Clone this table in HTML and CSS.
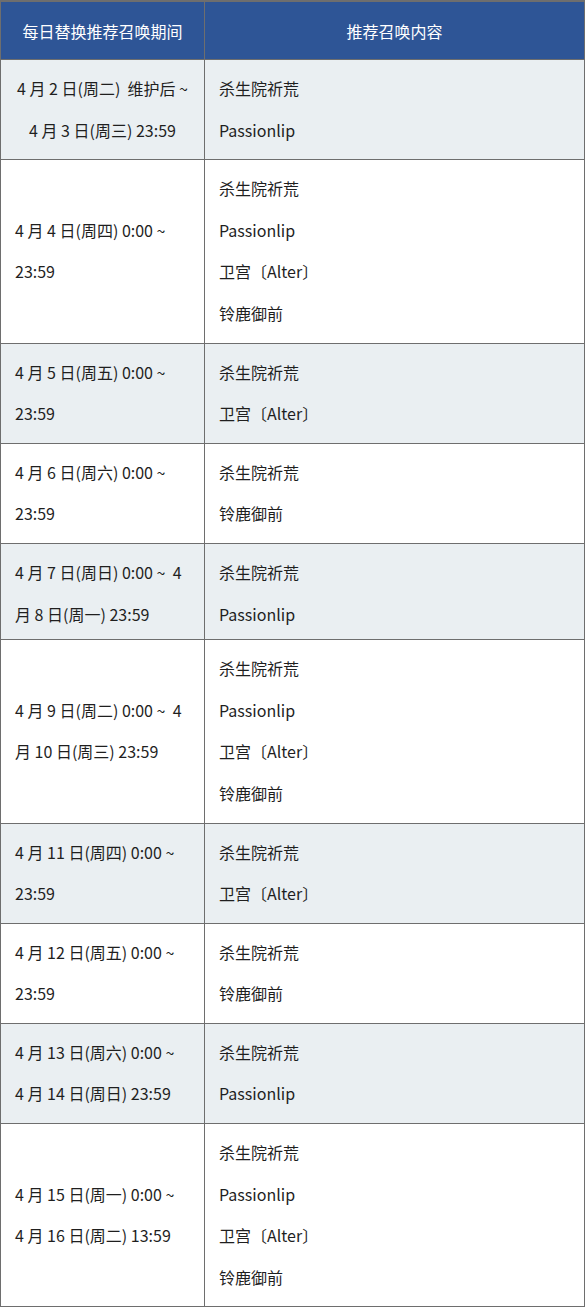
FILE: index.html
```html
<!DOCTYPE html>
<html lang="zh-CN">
<head>
<meta charset="utf-8">
<title>每日替换推荐召唤</title>
<link rel="stylesheet" href="styles.css">
</head>
<body>
<table class="schedule">
  <thead>
    <tr>
      <th class="col-period">每日替换推荐召唤期间</th>
      <th class="col-content">推荐召唤内容</th>
    </tr>
  </thead>
  <tbody>
    <tr class="shade">
      <td class="period center">4 月 2 日(周二)&nbsp; 维护后 ~<br>4 月 3 日(周三) 23:59</td>
      <td class="content">杀生院祈荒<br>Passionlip</td>
    </tr>
    <tr>
      <td class="period">4 月 4 日(周四) 0:00 ~<br>23:59</td>
      <td class="content">杀生院祈荒<br>Passionlip<br>卫宫〔Alter〕<br>铃鹿御前</td>
    </tr>
    <tr class="shade">
      <td class="period">4 月 5 日(周五) 0:00 ~<br>23:59</td>
      <td class="content">杀生院祈荒<br>卫宫〔Alter〕</td>
    </tr>
    <tr>
      <td class="period">4 月 6 日(周六) 0:00 ~<br>23:59</td>
      <td class="content">杀生院祈荒<br>铃鹿御前</td>
    </tr>
    <tr class="shade tight">
      <td class="period">4 月 7 日(周日) 0:00 ~&nbsp; 4<br>月 8 日(周一) 23:59</td>
      <td class="content">杀生院祈荒<br>Passionlip</td>
    </tr>
    <tr>
      <td class="period">4 月 9 日(周二) 0:00 ~&nbsp; 4<br>月 10 日(周三) 23:59</td>
      <td class="content">杀生院祈荒<br>Passionlip<br>卫宫〔Alter〕<br>铃鹿御前</td>
    </tr>
    <tr class="shade">
      <td class="period">4 月 11 日(周四) 0:00 ~<br>23:59</td>
      <td class="content">杀生院祈荒<br>卫宫〔Alter〕</td>
    </tr>
    <tr>
      <td class="period">4 月 12 日(周五) 0:00 ~<br>23:59</td>
      <td class="content">杀生院祈荒<br>铃鹿御前</td>
    </tr>
    <tr class="shade">
      <td class="period">4 月 13 日(周六) 0:00 ~<br>4 月 14 日(周日) 23:59</td>
      <td class="content">杀生院祈荒<br>Passionlip</td>
    </tr>
    <tr>
      <td class="period">4 月 15 日(周一) 0:00 ~<br>4 月 16 日(周二) 13:59</td>
      <td class="content">杀生院祈荒<br>Passionlip<br>卫宫〔Alter〕<br>铃鹿御前</td>
    </tr>
  </tbody>
</table>
</body>
</html>
```

FILE: styles.css
```css
html, body {
  margin: 0;
  padding: 0;
  background: #ffffff;
}

.schedule {
  width: 585px;
  border-collapse: collapse;
  table-layout: fixed;
  font-family: "Noto Sans CJK SC", "Noto Sans", sans-serif;
  font-size: 16px;
  color: #1f1f1f;
}

.schedule th,
.schedule td {
  border: 1px solid #6e6e6e;
  white-space: nowrap;
}

.schedule thead th {
  background: #2e5596;
  color: #ffffff;
  font-weight: normal;
  height: 57px;
  padding: 0;
  text-align: center;
  vertical-align: middle;
  border-top-width: 2px;
}

.col-period {
  width: 203px;
}

.schedule td {
  padding: 8px 14px;
  line-height: 41.6px;
  text-align: left;
  vertical-align: middle;
}

.schedule td.center {
  text-align: center;
  padding-left: 8px;
  padding-right: 8px;
}

.schedule tr.shade td {
  background: #eaeff2;
}

.schedule tr.tight td {
  padding-top: 8px;
  padding-bottom: 4px;
}
```
